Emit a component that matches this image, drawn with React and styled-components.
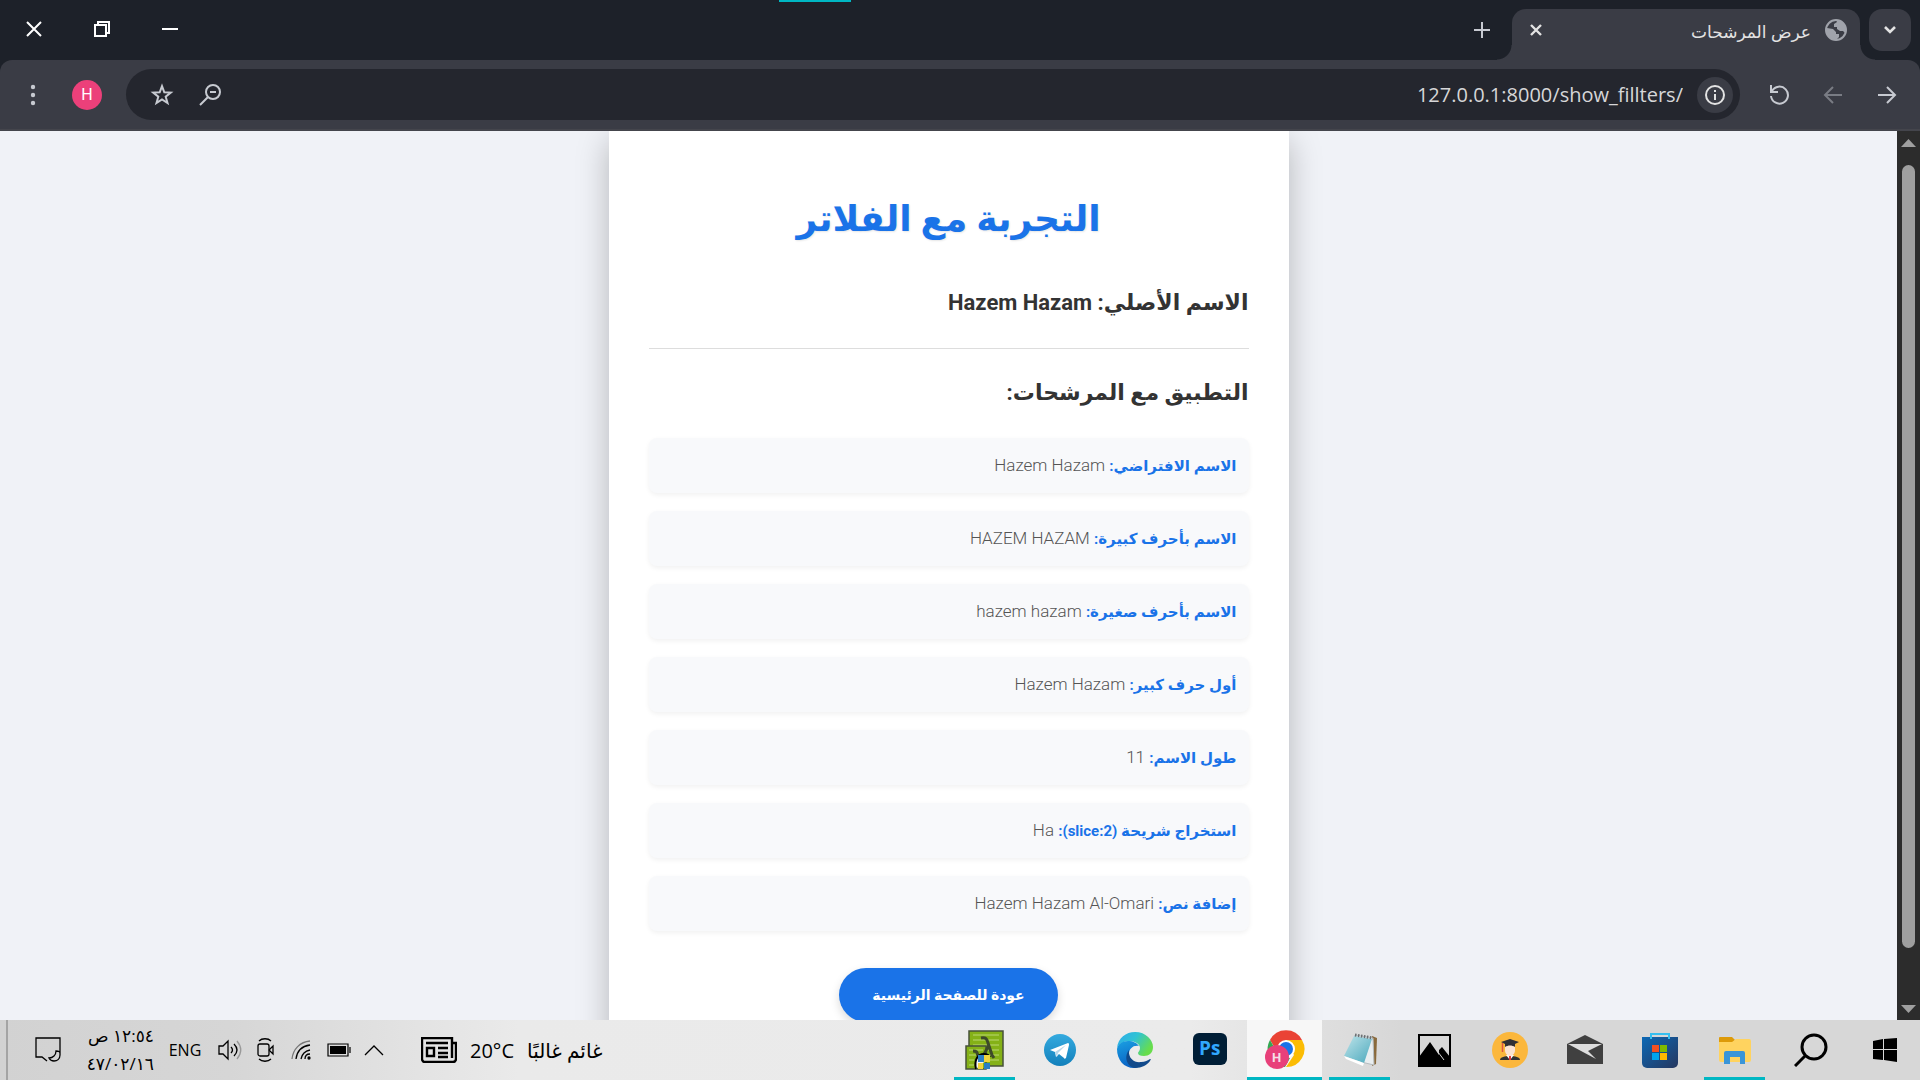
import React from "react";
import styled, { createGlobalStyle } from "styled-components";

const uiFont = `"Open Sans", "DejaVu Sans", sans-serif`;
const pageFont = `Roboto, "DejaVu Sans", sans-serif`;

const GlobalStyle = createGlobalStyle`
  *, *::before, *::after { box-sizing: border-box; }
  html, body { margin: 0; height: 100%; background: #1d2129; }
  h1, h2, ul { margin: 0; padding: 0; }
  button { border: 0; padding: 0; margin: 0; background: none; color: inherit; font: inherit; cursor: pointer; }
  svg { display: block; flex: none; }
`;

const Screen = styled.div`
  display: flex;
  flex-direction: column;
  height: 100vh;
  overflow: hidden;
  font-family: ${uiFont};
`;

/* Browser frame */

const TopEdge = styled.span`
  position: absolute;
  top: 0;
  left: 779px;
  width: 72px;
  height: 2px;
  background: #00b7c3;
`;

const TitleBar = styled.header`
  display: flex;
  flex: none;
  height: 60px;
  padding-right: 9px;
  background: #1d2129;
  color: #ffffff;
`;

const WindowButtons = styled.div`
  display: flex;
  flex: 1;
`;

const WindowButton = styled.button`
  display: flex;
  align-items: center;
  justify-content: center;
  width: 68px;
  height: 58px;
`;

const NewTabButton = styled.button`
  display: flex;
  align-items: center;
  justify-content: center;
  width: 60px;
  height: 60px;
  color: #c7cad1;
`;

const Tab = styled.div`
  position: relative;
  display: flex;
  align-items: center;
  gap: 14px;
  width: 348px;
  margin-top: 9px;
  padding: 0 13px 9px 18px;
  border-radius: 14px 14px 0 0;
  background: #3a3c45;
  color: #e3e3e3;

  &::before,
  &::after {
    content: "";
    position: absolute;
    bottom: 0;
    width: 15px;
    height: 15px;
  }
  &::before {
    right: 100%;
    background: radial-gradient(circle at 0 0, transparent 14px, #3a3c45 15px);
  }
  &::after {
    left: 100%;
    background: radial-gradient(circle at 100% 0, transparent 14px, #3a3c45 15px);
  }
`;

const TabTitle = styled.span`
  flex: 1;
  padding-top: 3px;
  direction: rtl;
  font-size: 17px;
  line-height: 24px;
  white-space: nowrap;
`;

const TabSearch = styled.button`
  display: flex;
  align-items: center;
  justify-content: center;
  width: 42px;
  height: 42px;
  margin: 9px 0 0 9px;
  border-radius: 13px;
  background: #3a3c45;
  color: #e3e3e3;
`;

const ToolbarBack = styled.div`
  flex: none;
  background: #1d2129;
`;

const Toolbar = styled.nav`
  display: flex;
  align-items: center;
  height: 71px;
  padding: 0 6px;
  border-bottom: 2px solid #44454c;
  border-radius: 12px 12px 0 0;
  background: #3a3c45;
  color: #c7cad1;
`;

const ToolButton = styled.button`
  display: flex;
  align-items: center;
  justify-content: center;
  width: 54px;
  height: 51px;
  opacity: ${(p) => (p.$dim ? 0.45 : 1)};
`;

const Avatar = styled.span`
  display: flex;
  align-items: center;
  justify-content: center;
  width: 30px;
  height: 30px;
  border-radius: 50%;
  background: #ec407a;
  color: #ffffff;
  font: 16px/30px Roboto, sans-serif;
`;

const AddressBar = styled.div`
  display: flex;
  flex: 1;
  align-items: center;
  height: 51px;
  margin: 0 12px;
  padding: 0 7px 0 12px;
  border-radius: 26px;
  background: #24262e;
`;

const AddressButton = styled.button`
  display: flex;
  align-items: center;
  justify-content: center;
  width: 48px;
  height: 40px;
`;

const AddressInput = styled.input`
  flex: 1;
  min-width: 0;
  padding: 0 14px;
  border: 0;
  outline: 0;
  background: transparent;
  color: #d6d6d8;
  font: 20px/30px ${uiFont};
  text-align: right;
`;

const InfoButton = styled.button`
  display: flex;
  align-items: center;
  justify-content: center;
  width: 36px;
  height: 36px;
  border-radius: 50%;
  background: #3a3c45;
  color: #e3e3e3;
`;

/* Web page */

const Viewport = styled.div`
  display: flex;
  flex: 1;
  min-height: 0;
`;

const Page = styled.main`
  flex: 1;
  overflow: hidden;
  direction: rtl;
  background: #f0f2f7;
  font-family: ${pageFont};
`;

const Card = styled.article`
  display: flex;
  flex-direction: column;
  max-width: 680px;
  margin: 0 auto;
  padding: 56px 40px 40px;
  background: #ffffff;
  box-shadow: 0 10px 30px rgba(0, 0, 0, 0.25);
`;

const Title = styled.h1`
  color: #1a73e8;
  font-size: 36px;
  font-weight: 700;
  line-height: 64px;
  text-align: center;
  text-shadow: 1px 1px 2px rgba(0, 0, 0, 0.1);
`;

const Heading = styled.h2`
  color: #333333;
  font-size: 22px;
  font-weight: 700;
  line-height: 44px;
`;

const OriginalName = styled(Heading)`
  margin-top: 30px;
  padding-bottom: 23px;
  border-bottom: 1px solid #dddddd;
`;

const FilterHeading = styled(Heading)`
  margin-top: 22px;
`;

const FilterList = styled.ul`
  display: grid;
  gap: 18px;
  margin-top: 23px;
  list-style: none;
`;

const FilterItem = styled.li`
  padding: 12px;
  border-radius: 8px;
  background: #f8f9fb;
  box-shadow: 0 2px 5px rgba(0, 0, 0, 0.06);
  color: #555555;
  font-size: 17px;
  font-weight: 300;
  line-height: 31px;

  strong {
    color: #1a73e8;
    font-size: 15px;
    font-weight: 700;
    line-height: 1;
  }
`;

const HomeLink = styled.a`
  align-self: center;
  margin-top: 37px;
  padding: 12px 33px;
  border-radius: 27px;
  background: #1a73e8;
  box-shadow: 0 4px 10px rgba(0, 0, 0, 0.15);
  color: #ffffff;
  font-size: 14px;
  font-weight: 700;
  line-height: 30px;
  text-decoration: none;
`;

const ScrollTrack = styled.div`
  display: flex;
  flex: none;
  flex-direction: column;
  align-items: center;
  width: 23px;
  padding: 8px 0 7px;
  background: #2c2c2c;
`;

const ScrollThumb = styled.div`
  flex: 1;
  width: 13px;
  margin: 18px 0 57px;
  border-radius: 7px;
  background: #9f9f9f;
`;

/* Taskbar */

const Taskbar = styled.footer`
  display: flex;
  flex: none;
  height: 60px;
  background: linear-gradient(90deg, #d2d2d2 0, #d6d6d6 12%, #eaeaea 27%, #ebebeb 62%, #d7d7d7 73%, #d7d7d7 100%);
  color: #000000;
`;

const Tray = styled.div`
  display: flex;
  flex: 1;
  align-items: center;
  padding-left: 6px;
`;

const TrayButton = styled.button`
  display: flex;
  align-items: center;
  justify-content: center;
  width: ${(p) => p.$width}px;
  height: 60px;
  font-size: 16px;
`;

const NotificationButton = styled(TrayButton)`
  border-left: 2px solid #a4a4a4;
`;

const Clock = styled.time`
  width: 66px;
  margin-right: 14px;
  direction: rtl;
  font-size: 17px;
  line-height: 28px;
  text-align: center;
  white-space: nowrap;
`;

const Weather = styled.button`
  display: flex;
  align-items: center;
  gap: 13px;
  height: 60px;
  margin-left: 24px;
  font-size: 20px;
  white-space: nowrap;
`;

const Apps = styled.div`
  display: flex;
`;

const AppButton = styled.button`
  display: flex;
  align-items: center;
  justify-content: center;
  width: ${(p) => p.$width || 75}px;
  height: 60px;
  background: linear-gradient(#00b7c3, #00b7c3) bottom / ${(p) => (p.$running ? "61px 3px" : "0 0")} no-repeat;
`;

const ActiveAppButton = styled(AppButton)`
  border-bottom: 3px solid #00b7c3;
  background: #f7f7f7;
  padding-top: 3px;
`;

const Stroke = ({ size, box = size, width = 2, children }) => (
  <svg width={size} height={size} viewBox={`0 0 ${box} ${box}`} fill="none" stroke="currentColor" strokeWidth={width}>
    {children}
  </svg>
);

const filters = [
  ["الاسم الافتراضي:", "Hazem Hazam"],
  ["الاسم بأحرف كبيرة:", "HAZEM HAZAM"],
  ["الاسم بأحرف صغيرة:", "hazem hazam"],
  ["أول حرف كبير:", "Hazem Hazam"],
  ["طول الاسم:", "11"],
  ["استخراج شريحة (slice:2):", "Ha"],
  ["إضافة نص:", "Hazem Hazam Al-Omari"],
];

function BrowserFrame() {
  return (
    <>
      <TitleBar>
        <WindowButtons>
          <WindowButton aria-label="إغلاق">
            <Stroke size={16}><path d="M1 1l14 14M15 1L1 15" /></Stroke>
          </WindowButton>
          <WindowButton aria-label="استعادة">
            <Stroke size={16}><path d="M1 4h11v11H1zM4 4V1h11v11h-3" /></Stroke>
          </WindowButton>
          <WindowButton aria-label="تصغير">
            <Stroke size={16}><path d="M0 8h16" /></Stroke>
          </WindowButton>
        </WindowButtons>
        <NewTabButton aria-label="علامة تبويب جديدة">
          <Stroke size={16}><path d="M8 0v16M0 8h16" /></Stroke>
        </NewTabButton>
        <Tab>
          <button aria-label="إغلاق علامة التبويب">
            <Stroke size={12} width={2.4}><path d="M1 1l10 10M11 1L1 11" /></Stroke>
          </button>
          <TabTitle>عرض المرشحات</TabTitle>
          <svg width="22" height="22" viewBox="0 0 22 22">
            <circle cx="11" cy="11" r="10" fill="none" stroke="#a0a3ab" strokeWidth="2" />
            <path fill="#a0a3ab" d="M11 1a10 10 0 0 1 10 10l-1 3-2-2h-3l-3-2V8H9V5l3-2zM2 9l6 1 3 3v2h3v3l-3 3A10 10 0 0 1 1 11z" />
          </svg>
        </Tab>
        <TabSearch aria-label="البحث في علامات التبويب">
          <Stroke size={14} width={2.6}><path d="M2 4l5 5 5-5" /></Stroke>
        </TabSearch>
      </TitleBar>
      <ToolbarBack>
        <Toolbar>
          <ToolButton aria-label="القائمة">
            <svg width="6" height="22" viewBox="0 0 6 22" fill="currentColor">
              <circle cx="3" cy="3" r="2.2" /><circle cx="3" cy="11" r="2.2" /><circle cx="3" cy="19" r="2.2" />
            </svg>
          </ToolButton>
          <ToolButton aria-label="الملف الشخصي"><Avatar>H</Avatar></ToolButton>
          <AddressBar>
            <AddressButton aria-label="إضافة إشارة">
              <Stroke size={24}>
                <path d="M12 3.200l2.300 6.100 6.500.3-5.100 4.100 1.800 6.300-5.500-3.600L6.500 20l1.800-6.300-5.100-4.100 6.500-.3z" />
              </Stroke>
            </AddressButton>
            <AddressButton aria-label="تصغير العرض">
              <Stroke size={22}><circle cx="14" cy="8" r="7" /><path d="M9 13l-8 8M11 8h6" /></Stroke>
            </AddressButton>
            <AddressInput aria-label="العنوان" dir="ltr" defaultValue="127.0.0.1:8000/show_fillters/" />
            <InfoButton aria-label="معلومات الموقع">
              <Stroke size={20}><circle cx="10" cy="10" r="9" /><path d="M10 9v6M10 5v2" /></Stroke>
            </InfoButton>
          </AddressBar>
          <ToolButton aria-label="إعادة التحميل">
            <Stroke size={20}><path d="M3 6a8.500 8.500 0 1 1-1 5M2 0v7h7" /></Stroke>
          </ToolButton>
          <ToolButton $dim aria-label="إلى الأمام">
            <Stroke size={20}><path d="M19 10H2M10 2l-8 8 8 8" /></Stroke>
          </ToolButton>
          <ToolButton aria-label="رجوع">
            <Stroke size={20}><path d="M1 10h17M10 2l8 8-8 8" /></Stroke>
          </ToolButton>
        </Toolbar>
      </ToolbarBack>
    </>
  );
}

function FiltersPage() {
  return (
    <Viewport>
      <Page>
        <Card>
          <Title>التجربة مع الفلاتر</Title>
          <OriginalName>الاسم الأصلي: Hazem Hazam</OriginalName>
          <FilterHeading>التطبيق مع المرشحات:</FilterHeading>
          <FilterList>
            {filters.map(([label, value]) => (
              <FilterItem key={label}><strong>{label}</strong> {value}</FilterItem>
            ))}
          </FilterList>
          <HomeLink href="/">عودة للصفحة الرئيسية</HomeLink>
        </Card>
      </Page>
      <ScrollTrack>
        <svg width="15" height="8" viewBox="0 0 15 8"><path fill="#9f9f9f" d="M0 8L7.500 0 15 8z" /></svg>
        <ScrollThumb />
        <svg width="15" height="8" viewBox="0 0 15 8"><path fill="#9f9f9f" d="M0 0h15L7.500 8z" /></svg>
      </ScrollTrack>
    </Viewport>
  );
}

const NotesIcon = () => (
  <svg width="40" height="40" viewBox="0 0 40 40">
    <path fill="#84b117" stroke="#47513a" strokeWidth="1.500" d="M4 1h34v35H4z" />
    <path stroke="#b9d873" strokeWidth="1.200" d="M8 5h26M8 10h26M8 15h26M20 20h14M24 25h10M24 30h10" />
    <path fill="#84b117" stroke="#47513a" strokeWidth="1.500" d="M1 16h20v23H1z" />
    <path stroke="#b9d873" d="M4 20h14M4 25h8M4 30h5M4 35h5" />
    <path fill="none" stroke="#3d4a2a" strokeWidth="3" d="M16 8c5-1 6 1 7 5l4 12 2 3M24 15l-7 13M8 21c4 0 4 1 5 5" />
    <path fill="#f4f4f4" stroke="#000" strokeWidth="2" d="M11 39c-2-8 1-15 8-15 3 0 5 1 6 3" />
    <path fill="#2b7fc4" d="M13 25h6v7h-6zM19 33h6v6h-6z" />
    <path fill="#f2d53c" d="M19 25h6v7h-6zM13 33h5v6h-5z" />
  </svg>
);

const TelegramIcon = () => (
  <svg width="34" height="34" viewBox="0 0 34 34">
    <defs><linearGradient id="tg" x2="0" y2="1"><stop stopColor="#34aadf" /><stop offset="1" stopColor="#1380bb" /></linearGradient></defs>
    <circle cx="17" cy="17" r="16" fill="url(#tg)" />
    <path fill="#fff" d="M7 17l18-7c1 0 1 1 1 2l-3 13c-1 1-2 1-2 0l-5-4-3 3-1-5z" />
    <path fill="#b7d7ea" d="M12 19l11-7-8 8-1 4z" />
  </svg>
);

const EdgeIcon = () => (
  <svg width="36" height="36" viewBox="0 0 36 36">
    <defs>
      <linearGradient id="e1" x1="0" x2="1" y2=".5"><stop stopColor="#2fa9ec" /><stop offset=".5" stopColor="#2fc3d4" /><stop offset="1" stopColor="#68dd4c" /></linearGradient>
      <linearGradient id="e2" x2=".3" y2="1"><stop stopColor="#1aa0e2" /><stop offset="1" stopColor="#0a63c4" /></linearGradient>
    </defs>
    <path fill="url(#e1)" d="M0 16C1 6 9 0 18 0c11 0 18 8 18 15 0 6-4 9-9 9-4 0-6-1-6-3 0-1 2-2 2-5 0-4-5-7-11-7C6 9 2 12 0 16z" />
    <path fill="url(#e2)" d="M0 17C1 12 5 9 11 9c5 0 9 2 11 5-5-1-10 2-10 8 0 7 6 11 12 11-2 2-4 3-7 3C7 36 0 28 0 17z" />
    <path fill="#114a8b" d="M12 18c-1 9 6 13 12 12 4 0 7-2 9-3 1 0 1 0 0 2-3 4-8 7-15 7-7-1-12-10-6-18z" />
    <path fill="#ececec" d="M16 15c2-1 5-1 6 1 0 2-2 4-2 5 1 3 4 4 8 4-8 3-15-3-12-10z" />
  </svg>
);

const PhotoshopIcon = () => (
  <svg width="34" height="34" viewBox="0 0 34 34">
    <rect width="34" height="32" rx="6" fill="#001e36" />
    <text x="6" y="22" fill="#31a8ff" fontFamily="Open Sans, sans-serif" fontSize="19" fontWeight="700">Ps</text>
  </svg>
);

const ChromeIcon = () => (
  <svg width="40" height="40" viewBox="0 0 40 40">
    <path fill="#ea4335" d="M5 10a18 18 0 0 1 32 0H21L13 23z" />
    <path fill="#fbbc04" d="M37 10a18 18 0 0 1-16 27l8-12-8-15z" />
    <path fill="#34a853" d="M5 10l8 14 8 3 4 1-5 9A18 18 0 0 1 5 10z" />
    <circle cx="21" cy="19" r="9" fill="#fff" /><circle cx="21" cy="19" r="7" fill="#1a73e8" />
    <circle cx="12" cy="27" r="12" fill="#e8407a" />
    <text x="7" y="32" fill="#f6dfe7" fontFamily="Roboto, sans-serif" fontSize="13" fontWeight="700">H</text>
  </svg>
);

const NotepadIcon = () => (
  <svg width="36" height="36" viewBox="0 0 36 36">
    <path fill="#8a6a3c" d="M30 4l5 2-1 26-4 2z" />
    <path fill="#e9eef0" stroke="#b5bcc0" d="M13 3l18 3 1 27-13-3z" />
    <defs><linearGradient id="np" x2="1" y2="1"><stop stopColor="#bfe4ea" /><stop offset="1" stopColor="#4ba9bd" /></linearGradient></defs>
    <path fill="url(#np)" d="M12 4l18 3-8 24-20-7z" />
    <path fill="#fff" d="M2 24l20 7-1 3L4 27z" />
    <path stroke="#6b6f72" strokeWidth="3" strokeDasharray="1.500 1.500" d="M13 3l18 3" />
  </svg>
);

const PhotosIcon = () => (
  <svg width="33" height="33" viewBox="0 0 33 33">
    <path fill="none" stroke="#000" strokeWidth="2" d="M1 1h31v31H1z" />
    <path d="M1 23L12 8l9 13 0-5 3-3 8 10v9H1z" />
    <path stroke="#d7d7d7" strokeWidth="1" d="M20 18l6 8" />
  </svg>
);

const StudentIcon = () => (
  <svg width="36" height="36" viewBox="0 0 36 36">
    <circle cx="18" cy="18" r="18" fill="#fbb73c" />
    <path fill="#333" d="M8 28c0-3 5-4 10-4s10 1 10 4z" />
    <path fill="#fff" d="M14 23l4 5 4-5z" /><path fill="#e33d3d" d="M17 24h2v4h-2z" />
    <path fill="#fbe3d2" d="M13 12h10v6c0 4-3 6-5 6s-5-2-5-6z" />
    <path fill="#302f33" d="M18 7l9 3-4 2v3c-3-2-7-2-10 0v-3l-4-2z" />
    <path stroke="#e0563f" strokeWidth="1.500" d="M10.500 11v9" />
  </svg>
);

const MailIcon = () => (
  <svg width="36" height="30" viewBox="0 0 36 30">
    <path fill="#404040" d="M0 9l18-9 18 9v20H0z" />
    <path fill="#dedede" d="M1 9h34l-14 7 8 8z" />
  </svg>
);

const StoreIcon = () => (
  <svg width="36" height="36" viewBox="0 0 36 36">
    <defs><linearGradient id="st" x2="1" y2="1"><stop stopColor="#0b68b5" /><stop offset="1" stopColor="#26375f" /></linearGradient></defs>
    <path fill="url(#st)" d="M0 5h36v26a5 5 0 0 1-5 5H5a5 5 0 0 1-5-5z" />
    <path fill="none" stroke="#35bff0" strokeWidth="2" d="M9 7V2h18v5" />
    <path fill="#f25022" d="M10 13h7v7h-7z" /><path fill="#7fba00" d="M18 13h7v7h-7z" />
    <path fill="#00a4ef" d="M10 21h7v7h-7z" /><path fill="#ffb900" d="M18 21h7v7h-7z" />
  </svg>
);

const ExplorerIcon = () => (
  <svg width="32" height="28" viewBox="0 0 32 28">
    <path fill="#dd9a09" d="M0 2a1 1 0 0 1 1-1h12l3 3-3 4H0z" />
    <path fill="#ffd35f" d="M0 6h13l4-3h13a2 2 0 0 1 2 2v19a2 2 0 0 1-2 2H2a2 2 0 0 1-2-2z" />
    <path fill="#3a95d8" d="M5 17a2 2 0 0 1 2-2h17a2 2 0 0 1 2 2v11h-5v-7H11v7H5z" />
  </svg>
);

const WindowsIcon = () => (
  <svg width="24" height="24" viewBox="0 0 24 24">
    <path d="M0 3l10-2v10H0zM11 1l13-1v11H11zM0 12h10v10L0 21zM11 12h13v12l-13-2z" />
  </svg>
);

function DesktopTaskbar() {
  return (
    <Taskbar>
      <Tray>
        <NotificationButton $width={82} aria-label="الإشعارات">
          <svg width="26" height="26" viewBox="0 0 26 26" fill="none" stroke="#000" strokeWidth="1.300">
            <path d="M12 24l-5-4H1V1h24v13M25 14v4c0 4-3 6-6 6-2 0-4-1-5-3 4 0 7-3 7-7 3 0 4 1 4 2" />
          </svg>
        </NotificationButton>
        <Clock>١٢:٥٤ ص<br />٤٧/٠٢/١٦</Clock>
        <TrayButton $width={34}>ENG</TrayButton>
        <TrayButton $width={55} aria-label="الصوت">
          <svg width="24" height="22" viewBox="0 0 24 22" fill="none" stroke="#000" strokeWidth="1.300">
            <path d="M1 7h4l5-5v18l-5-5H1zM13 8c2 2 2 4 0 6M16 5c4 4 4 8 0 12" /><path stroke="#999" d="M19 2c5 6 5 12 0 18" />
          </svg>
        </TrayButton>
        <TrayButton $width={18} aria-label="الاجتماع الآن">
          <svg width="18" height="24" viewBox="0 0 18 24" fill="none" stroke="#000" strokeWidth="1.300">
            <rect x="1" y="6" width="11" height="12" rx="2" /><path d="M12 12l4-4v8l-4-4M2 3c3-3 9-3 12 0M2 21c3 3 9 3 12 0" />
          </svg>
        </TrayButton>
        <TrayButton $width={52} aria-label="الشبكة">
          <svg width="20" height="20" viewBox="0 0 20 20" fill="none" stroke="#000" strokeWidth="1.300">
            <path stroke="#777" d="M1 19C2 9 9 2 19 1" /><path d="M5 19c1-8 6-13 14-14M10 19c1-5 4-8 9-9M14 19c0-3 2-5 5-5" /><circle cx="18" cy="18" r="1" fill="#000" />
          </svg>
        </TrayButton>
        <TrayButton $width={24} aria-label="البطارية">
          <svg width="24" height="14" viewBox="0 0 24 14">
            <path fill="none" stroke="#000" strokeWidth="1.200" d="M1 1h20v12H1zM23 4v6" /><path d="M3 3h16v8H3z" />
          </svg>
        </TrayButton>
        <TrayButton $width={46} aria-label="الرموز المخفية">
          <Stroke size={20} width={1.3}><path d="M1 15l9-9 9 9" /></Stroke>
        </TrayButton>
        <Weather>
          <svg width="36" height="26" viewBox="0 0 36 26" fill="none" stroke="#000" strokeWidth="2.400">
            <path d="M31 6h4v16a3 3 0 0 1-3 3H4a3 3 0 0 1-3-3V1h30v20M5 6h22M17 11h10M17 16h10M17 20h10M6 11h7v8H6z" />
          </svg>
          <span>20°C</span>
          <span dir="rtl">غائم غالبًا</span>
        </Weather>
      </Tray>
      <Apps>
        <AppButton $running aria-label="Notes"><NotesIcon /></AppButton>
        <AppButton aria-label="Telegram"><TelegramIcon /></AppButton>
        <AppButton aria-label="Edge"><EdgeIcon /></AppButton>
        <AppButton aria-label="Photoshop"><PhotoshopIcon /></AppButton>
        <ActiveAppButton aria-label="Chrome"><ChromeIcon /></ActiveAppButton>
        <AppButton $running aria-label="Notepad"><NotepadIcon /></AppButton>
        <AppButton aria-label="Photos"><PhotosIcon /></AppButton>
        <AppButton aria-label="Student"><StudentIcon /></AppButton>
        <AppButton aria-label="Mail"><MailIcon /></AppButton>
        <AppButton aria-label="Store"><StoreIcon /></AppButton>
        <AppButton $running aria-label="Explorer"><ExplorerIcon /></AppButton>
        <AppButton $width={77} aria-label="Search">
          <Stroke size={34} width={3}><circle cx="20" cy="14" r="12" /><path d="M11 23L1 33" /></Stroke>
        </AppButton>
        <AppButton $width={71} aria-label="Start"><WindowsIcon /></AppButton>
      </Apps>
    </Taskbar>
  );
}

export default function App() {
  return (
    <Screen>
      <GlobalStyle />
      <TopEdge />
      <BrowserFrame />
      <FiltersPage />
      <DesktopTaskbar />
    </Screen>
  );
}
